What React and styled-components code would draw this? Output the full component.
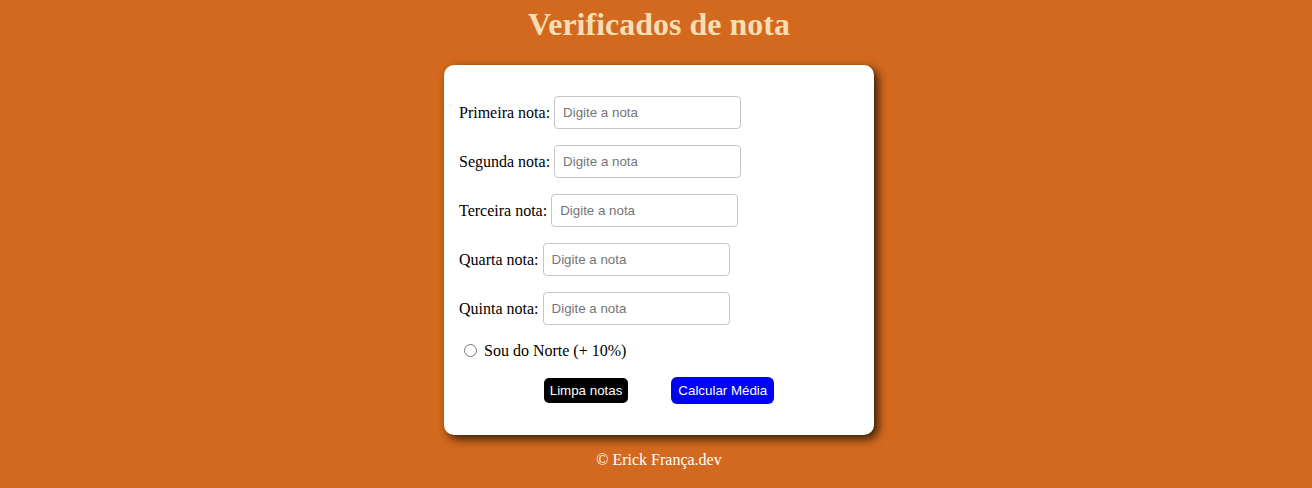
import React from "react";
import styled, { createGlobalStyle } from "styled-components";

const Global = createGlobalStyle`
  html, body { margin: 0; padding: 0; background: #d2691e; }
  body { font-family: "Liberation Serif", "Times New Roman", serif; font-size: 16px; }
`;

const Page = styled.div`
  display: flex;
  flex-direction: column;
  align-items: center;
  padding-left: 6px;
`;

const Title = styled.h1`
  margin: 6px 0 0;
  font-size: 32px;
  font-weight: bold;
  line-height: 37px;
  color: #f5deb3;
`;

const Card = styled.form`
  margin-top: 22px;
  width: 430px;
  height: 370px;
  box-sizing: border-box;
  background: #fff;
  border-radius: 10px;
  box-shadow: 4px 4px 10px rgba(0, 0, 0, 0.75);
  padding: 31px 15px 15px;
  display: flex;
  flex-direction: column;
  gap: 16px;
`;

const Row = styled.div`
  display: flex;
  align-items: center;
  height: 33px;
  color: #000;
`;

const Label = styled.label`
  margin-right: 4px;
  white-space: nowrap;
`;

const Input = styled.input`
  width: 187px;
  height: 33px;
  box-sizing: border-box;
  padding: 0 8px;
  border: 1px solid #c6c6c6;
  border-radius: 4px;
  font-family: "Liberation Sans", Arial, sans-serif;
  font-size: 13.333px;
  color: #000;
  &::placeholder { color: #757575; }
`;

const RadioRow = styled.div`
  display: flex;
  align-items: center;
  height: 19px;
`;

const Radio = styled.input`
  width: 13px;
  height: 13px;
  margin: 0 7px 0 5px;
  accent-color: #767676;
`;

const Buttons = styled.div`
  display: flex;
  justify-content: center;
  align-items: center;
  gap: 43px;
  height: 28px;
`;

const Button = styled.button`
  box-sizing: border-box;
  height: ${(p) => (p.$primary ? "27px" : "25px")};
  padding: 0 ${(p) => (p.$primary ? "7px" : "6px")};
  border: none;
  border-radius: ${(p) => (p.$primary ? "6px" : "5px")};
  background: ${(p) => (p.$primary ? "#0000ff" : "#000")};
  color: #fff;
  font-family: "Liberation Sans", Arial, sans-serif;
  font-size: 13.333px;
  cursor: pointer;
`;

const Footer = styled.footer`
  margin-top: 16px;
  color: #fff;
  font-size: 16px;
  line-height: 18px;
`;

const notas = ["Primeira", "Segunda", "Terceira", "Quarta", "Quinta"];

export default function App() {
  return (
    <Page>
      <Global />
      <Title>Verificados de nota</Title>
      <Card onSubmit={(e) => e.preventDefault()}>
        {notas.map((n) => (
          <Row key={n}>
            <Label htmlFor={n}>{n} nota:</Label>
            <Input id={n} type="text" placeholder="Digite a nota" />
          </Row>
        ))}
        <RadioRow>
          <Radio type="radio" id="norte" />
          <label htmlFor="norte">Sou do Norte (+ 10%)</label>
        </RadioRow>
        <Buttons>
          <Button type="button">Limpa notas</Button>
          <Button type="button" $primary>Calcular Média</Button>
        </Buttons>
      </Card>
      <Footer>© Erick França.dev</Footer>
    </Page>
  );
}
